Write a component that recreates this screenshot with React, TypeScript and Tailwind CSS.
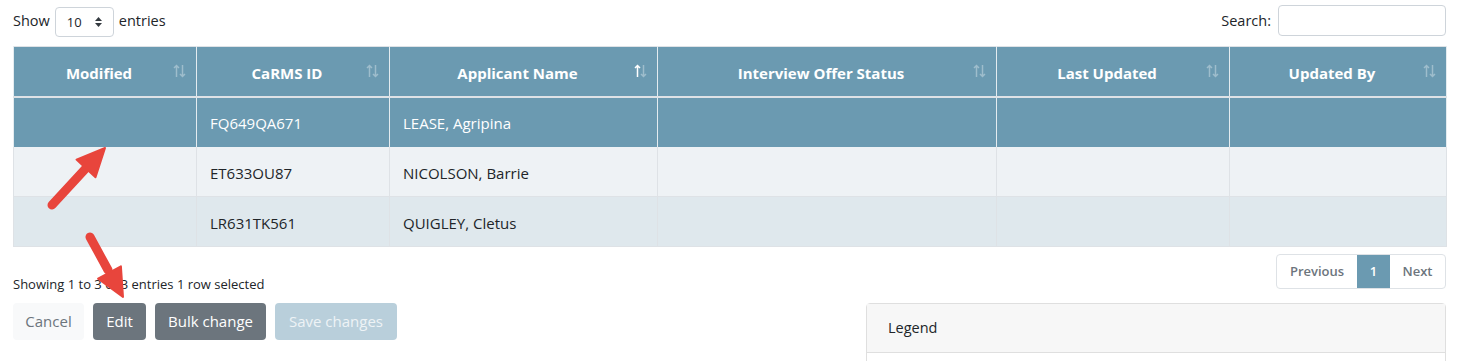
import React from "react";

const columns = [
  { label: "Modified", width: "w-[183px]", active: false },
  { label: "CaRMS ID", width: "w-[193px]", active: false },
  { label: "Applicant Name", width: "w-[268px]", active: true },
  { label: "Interview Offer Status", width: "w-[339px]", active: false },
  { label: "Last Updated", width: "w-[233px]", active: false },
  { label: "Updated By", width: "w-[217px]", active: false },
];

const rows = [
  { id: "FQ649QA671", name: "LEASE, Agripina", selected: true },
  { id: "ET633OU87", name: "NICOLSON, Barrie", selected: false },
  { id: "LR631TK561", name: "QUIGLEY, Cletus", selected: false },
];

// up/down sort arrows, the up one lit when the column is sorted
const SortIcon = ({ active }: { active: boolean }) => (
  <svg
    className="absolute right-[10px] top-[17px]"
    width="13"
    height="14"
    viewBox="0 0 13 14"
    fill="none"
    strokeWidth="1.5"
  >
    <path
      d="M3.5 13 V1.5 M1 4 L3.5 1.5 L6 4"
      stroke={active ? "#ffffff" : "rgba(255,255,255,0.35)"}
    />
    <path d="M9.5 1 V12.5 M7 10 L9.5 12.5 L12 10" stroke="rgba(255,255,255,0.35)" />
  </svg>
);

const Arrows = () => (
  <svg
    className="pointer-events-none absolute left-0 top-0"
    width="1459"
    height="361"
    viewBox="0 0 1459 361"
  >
    <g fill="#e8453c" stroke="#e8453c" strokeLinejoin="round">
      <line x1="52" y1="205" x2="88" y2="166" strokeWidth="9" strokeLinecap="round" />
      <polygon points="105,148 95.5,177.2 76.5,159.6" strokeWidth="2" />
      <line x1="90" y1="237" x2="108" y2="270" strokeWidth="9" strokeLinecap="round" />
      <polygon points="123,297 120.9,266.3 98.1,278.7" strokeWidth="2" />
    </g>
  </svg>
);

export default function App() {
  return (
    <div className="relative h-[361px] w-[1459px] overflow-hidden bg-white px-[13px] font-['Open_Sans',sans-serif] text-[14px] text-[#212529]">
      {/* top controls */}
      <div className="flex h-[46px] items-start justify-between">
        <label className="mt-[7px] flex items-center gap-[5px]">
          <span className="-mt-[3px] text-[14.5px]">Show</span>
          <span className="flex h-[30px] w-[59px] items-center justify-between rounded-[4px] border border-[#ced4da] pl-[11px] pr-[10px] text-[13px]">
            <span className="mt-[2px]">10</span>
            <svg width="9" height="12" viewBox="0 0 9 12">
              <path d="M4.5 1 L8 5 H1 Z M4.5 11 L8 7 H1 Z" fill="#343a40" />
            </svg>
          </span>
          <span className="-mt-[3px] text-[14.5px]">entries</span>
        </label>
        <label className="mt-[5px] flex items-center gap-[7px]">
          <span className="text-[14.5px]">Search:</span>
          <span className="h-[31px] w-[168px] rounded-[4px] border border-[#ced4da]" />
        </label>
      </div>

      {/* table */}
      <table className="w-[1433px] table-fixed border-collapse border border-[#dee2e6]">
        <thead>
          <tr className="bg-[#6b9ab1] text-white">
            {columns.map((c) => (
              <th
                key={c.label}
                className={`${c.width} relative h-[50px] border-x border-b-2 border-x-[#e4ecf0] border-b-[#dee2e6] pt-[3px] pr-[22px] pl-[10px] text-center text-[15px] font-bold`}
              >
                {c.label}
                <SortIcon active={c.active} />
              </th>
            ))}
          </tr>
        </thead>
        <tbody>
          {rows.map((r, i) => (
            <tr
              key={r.id}
              className={
                r.selected
                  ? "bg-[#6b9ab1] text-white"
                  : i === 1
                  ? "bg-[#eef2f5] text-[#212529]"
                  : "bg-[#dfe8ed] text-[#212529]"
              }
            >
              {[" ", r.id, r.name, "", "", ""].map((v, j) => (
                <td
                  key={j}
                  className={`h-[50px] border-x px-[13px] pt-[3px] text-[15px] ${
                    r.selected ? "border-x-[#e4ecf0]" : "border-x-[#dee2e6]"
                  } ${i === 1 ? "" : "border-t border-t-[#dee2e6]"}`}
                >
                  {v}
                </td>
              ))}
            </tr>
          ))}
        </tbody>
      </table>

      {/* info + pagination */}
      <div className="mt-[7px] flex items-start justify-between">
        <div className="mt-[21px] text-[13px]">Showing 1 to 3 of 3 entries 1 row selected</div>
        <div className="flex h-[35px] overflow-hidden rounded-[4px] border border-[#dee2e6] text-[13px] font-semibold text-[#6c757d]">
          <span className="flex w-[80px] items-center justify-center">Previous</span>
          <span className="flex w-[33px] items-center justify-center bg-[#6b9ab1] text-white">1</span>
          <span className="flex w-[55px] items-center justify-center">Next</span>
        </div>
      </div>

      {/* buttons + legend */}
      <div className="mt-[8px] flex items-start justify-between">
        <div className="flex gap-[9px] text-[15px]">
          <button className="h-[37px] w-[71px] rounded-[4px] bg-[#f8f9fa] text-[#6c757d]">Cancel</button>
          <button className="h-[37px] w-[53px] rounded-[4px] bg-[#6c757d] text-white">Edit</button>
          <button className="h-[37px] w-[111px] rounded-[4px] bg-[#6c757d] text-white">Bulk change</button>
          <button className="h-[37px] w-[122px] rounded-[4px] bg-[#b9cfdb] text-[#eef3f6]">Save changes</button>
        </div>
        <div className="h-[80px] w-[580px] rounded-[4px] border border-[#dfdfdf]">
          <div className="flex h-[49px] items-center border-b border-[#dfdfdf] bg-[#f7f7f7] px-[21px] text-[14.5px]">
            Legend
          </div>
        </div>
      </div>

      <Arrows />
    </div>
  );
}
